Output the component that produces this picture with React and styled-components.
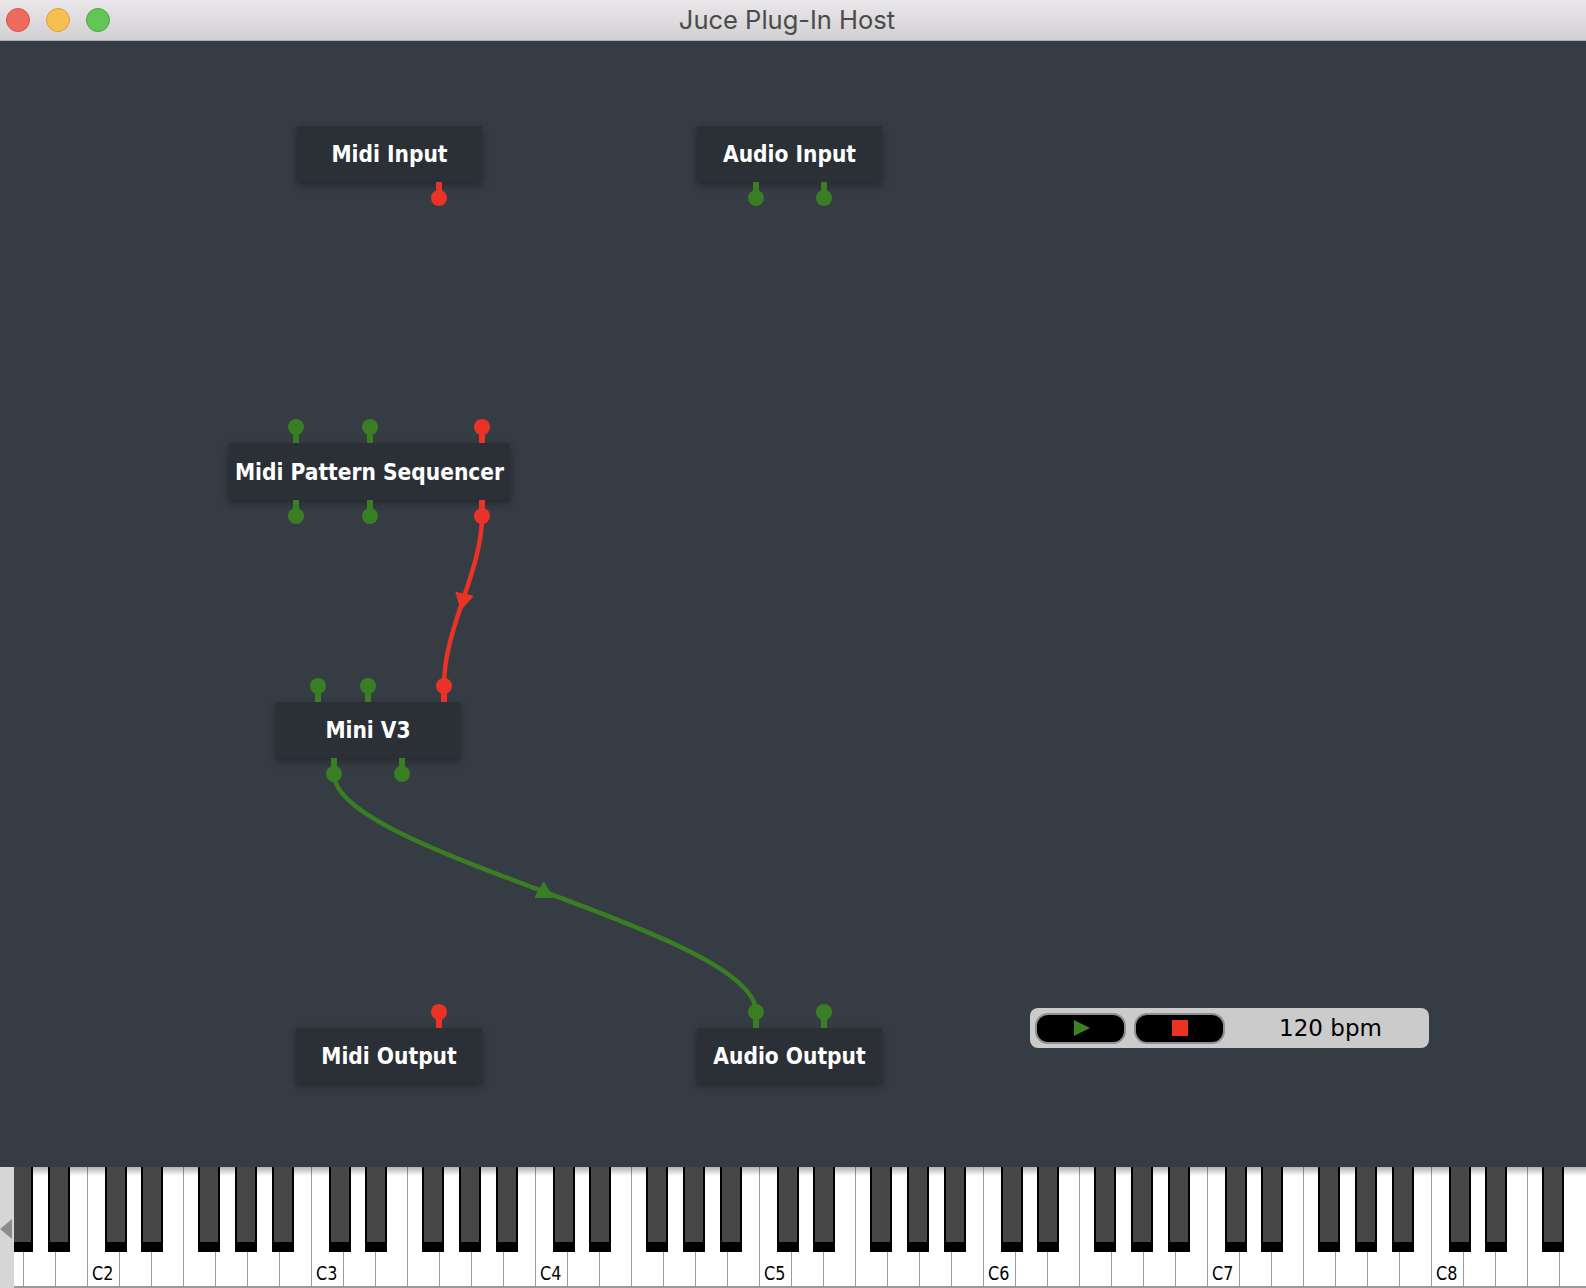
import React from 'react';
import styled, { createGlobalStyle } from 'styled-components';

const GlobalStyle = createGlobalStyle`
  * { box-sizing: border-box; }
  html, body { margin: 0; padding: 0; width: 1586px; height: 1288px; overflow: hidden; background: #363c44; }
  #root { width: 1586px; height: 1288px; }
`;

const RED = '#ea3326';
const GREEN = '#3a7e23';

const Window = styled.div`
  width: 1586px;
  height: 1288px;
  display: flex;
  flex-direction: column;
  overflow: hidden;
  font-family: "DejaVu Sans", sans-serif;
`;

const TitleBar = styled.div`
  flex: none;
  height: 41px;
  display: grid;
  grid-template-columns: 1fr auto 1fr;
  align-items: center;
  padding: 0 18px 0 6px;
  background: linear-gradient(#e9e7e9, #d2d0d2);
  border-bottom: 1px solid #aeacae;
`;

const Lights = styled.div`
  display: flex;
  gap: 16px;
`;

const Light = styled.span`
  width: 24px;
  height: 24px;
  border-radius: 50%;
  background: ${p => p.$bg};
  border: 1px solid ${p => p.$edge};
`;

const Title = styled.div`
  font-family: Inter, "Open Sans", sans-serif;
  font-size: 25.5px;
  color: #4b4b4b;
  line-height: 1;
`;

const Canvas = styled.div`
  flex: 1;
  position: relative;
  background: #363c44;
`;

const Wires = styled.svg`
  position: absolute;
  left: 0;
  top: 0;
  pointer-events: none;
`;

const NodeBox = styled.div`
  position: absolute;
  left: ${p => p.$x}px;
  top: ${p => p.$y}px;
  width: ${p => p.$w}px;
  height: ${p => p.$h}px;
  background: #2b3036;
  box-shadow: 0 3px 7px rgba(0, 0, 0, 0.35);
  display: flex;
  align-items: center;
  justify-content: center;
  color: #ffffff;
  font-family: "DejaVu Sans Condensed", "DejaVu Sans", sans-serif;
  font-stretch: condensed;
  font-weight: bold;
  font-size: 22.5px;
  white-space: nowrap;
`;

const Pin = styled.div`
  position: absolute;
  left: ${p => p.$x - 3}px;
  width: 6px;
  height: 16px;
  background: ${p => p.$color};
  ${p => (p.$side === 'top' ? 'bottom: 100%;' : 'top: 100%;')}
  &::after {
    content: '';
    position: absolute;
    left: -5px;
    width: 16px;
    height: 16px;
    border-radius: 50%;
    background: ${p => p.$color};
    ${p => (p.$side === 'top' ? 'top: -8px;' : 'bottom: -8px;')}
  }
`;

const Transport = styled.div`
  position: absolute;
  left: 1030px;
  top: 967px;
  width: 399px;
  height: 40px;
  border-radius: 8px;
  background: #cbcbcb;
  display: flex;
  align-items: center;
  gap: 8px;
  padding: 0 5px;
`;

const TransportButton = styled.div`
  width: 91px;
  height: 31px;
  border-radius: 13px;
  background: #000;
  border: 2px solid #8b9095;
  display: flex;
  align-items: center;
  justify-content: center;
`;

const PlayGlyph = styled.span`
  width: 0;
  height: 0;
  border-top: 8px solid transparent;
  border-bottom: 8px solid transparent;
  border-left: 16px solid #3c8123;
  margin-left: 2px;
`;

const StopGlyph = styled.span`
  width: 16px;
  height: 16px;
  background: ${RED};
`;

const Bpm = styled.div`
  flex: 1;
  text-align: center;
  font-family: "DejaVu Sans", sans-serif;
  font-size: 23px;
  color: #000;
  padding-left: 4px;
`;

const Keyboard = styled.div`
  flex: none;
  height: 121px;
  display: flex;
  background: #fff;
`;

const ScrollButton = styled.div`
  flex: none;
  width: 14px;
  background: #d6d6d6;
  display: flex;
  align-items: center;
  padding-top: 2px;
  &::before {
    content: '';
    width: 0;
    height: 0;
    border-top: 10px solid transparent;
    border-bottom: 10px solid transparent;
    border-right: 12px solid #8d8d8d;
  }
`;

const KeyArea = styled.div`
  flex: 1;
  position: relative;
  overflow: hidden;
  border-bottom: 2px solid #9a9a9a;
  &::after {
    content: '';
    position: absolute;
    left: 0;
    right: 0;
    top: 0;
    height: 9px;
    background: linear-gradient(rgba(0, 0, 0, 0.3), rgba(0, 0, 0, 0));
    z-index: 1;
  }
`;

const KeyStrip = styled.div`
  position: relative;
  display: flex;
  height: 100%;
  margin-left: -23px;
`;

const WhiteKey = styled.div`
  flex: none;
  width: 32px;
  height: 100%;
  position: relative;
  border-left: 1px solid #9b9b9b;
  background: #fff;
`;

const KeyLabel = styled.span`
  position: absolute;
  left: 4px;
  bottom: 3px;
  font-family: "DejaVu Sans", sans-serif;
  font-size: 20px;
  line-height: 20px;
  color: #000;
  transform: scaleX(0.8);
  transform-origin: left bottom;
`;

const BlackKey = styled.div.attrs(p => ({ style: { left: `${p.$left}px` } }))`
  position: absolute;
  top: 0;
  width: 22px;
  height: 85px;
  background: #000;
  z-index: 2;
  &::before {
    content: '';
    position: absolute;
    left: 2px;
    right: 2px;
    top: 0;
    bottom: 10px;
    background: #474747;
  }
`;

const CANVAS_TOP = 41;

const nodes = [
  { name: 'Midi Input', x: 297, y: 126, w: 185, h: 56, pins: [{ side: 'bottom', x: 142, c: RED }] },
  {
    name: 'Audio Input', x: 697, y: 126, w: 185, h: 56,
    pins: [{ side: 'bottom', x: 59, c: GREEN }, { side: 'bottom', x: 127, c: GREEN }],
  },
  {
    name: 'Midi Pattern Sequencer', x: 229, y: 443, w: 281, h: 57,
    pins: [
      { side: 'top', x: 67, c: GREEN }, { side: 'top', x: 141, c: GREEN }, { side: 'top', x: 253, c: RED },
      { side: 'bottom', x: 67, c: GREEN }, { side: 'bottom', x: 141, c: GREEN }, { side: 'bottom', x: 253, c: RED },
    ],
  },
  {
    name: 'Mini V3', x: 276, y: 702, w: 184, h: 56,
    pins: [
      { side: 'top', x: 42, c: GREEN }, { side: 'top', x: 92, c: GREEN }, { side: 'top', x: 168, c: RED },
      { side: 'bottom', x: 58, c: GREEN }, { side: 'bottom', x: 126, c: GREEN },
    ],
  },
  { name: 'Midi Output', x: 296, y: 1028, w: 186, h: 55, pins: [{ side: 'top', x: 143, c: RED }] },
  {
    name: 'Audio Output', x: 697, y: 1028, w: 185, h: 55,
    pins: [{ side: 'top', x: 59, c: GREEN }, { side: 'top', x: 127, c: GREEN }],
  },
];

const wires = [
  { a: { x: 482, y: 516 }, b: { x: 444, y: 685 }, c: RED },
  { a: { x: 334, y: 774 }, b: { x: 756, y: 1012 }, c: GREEN },
];

function Wire({ a, b, c }) {
  const p1 = { x: a.x, y: a.y - CANVAS_TOP };
  const p2 = { x: b.x, y: b.y - CANVAS_TOP };
  const dy = p2.y - p1.y;
  const d = `M${p1.x} ${p1.y} C${p1.x} ${p1.y + dy * 0.33} ${p2.x} ${p1.y + dy * 0.66} ${p2.x} ${p2.y}`;
  const mx = (p1.x + p2.x) / 2;
  const my = (p1.y + p2.y) / 2;
  const ang = (Math.atan2(p2.y - p1.y, p2.x - p1.x) * 180) / Math.PI;
  return (
    <g>
      <path d={d} fill="none" stroke={c} strokeWidth="4.5" strokeLinecap="round" />
      <polygon
        points="-6,-8 -6,8 8,0"
        fill={c}
        stroke={c}
        strokeWidth="2"
        strokeLinejoin="round"
        transform={`translate(${mx} ${my}) rotate(${ang})`}
      />
    </g>
  );
}

const LETTERS = ['C', 'D', 'E', 'F', 'G', 'A', 'B'];
const BLACK_OFFSET = { C: 18, D: 22, F: 15, G: 20, A: 25 };
const whiteKeys = Array.from({ length: 50 }, (_, i) => {
  const n = 4 + i;
  return { letter: LETTERS[n % 7], octave: 1 + Math.floor(n / 7) };
});

function PianoKeyboard() {
  return (
    <Keyboard>
      <ScrollButton />
      <KeyArea>
        <KeyStrip>
          {whiteKeys.map((k, i) => (
            <WhiteKey key={`w${i}`}>
              {k.letter === 'C' && <KeyLabel>C{k.octave}</KeyLabel>}
            </WhiteKey>
          ))}
          {whiteKeys.map((k, i) =>
            BLACK_OFFSET[k.letter] !== undefined && i < whiteKeys.length - 1 ? (
              <BlackKey key={`b${i}`} $left={i * 32 + BLACK_OFFSET[k.letter]} />
            ) : null
          )}
        </KeyStrip>
      </KeyArea>
    </Keyboard>
  );
}

export default function App() {
  return (
    <>
      <GlobalStyle />
      <Window>
        <TitleBar>
          <Lights>
            <Light $bg="#ee6a5f" $edge="#d5544a" />
            <Light $bg="#f6bf50" $edge="#d9a23f" />
            <Light $bg="#62c555" $edge="#4ea940" />
          </Lights>
          <Title>Juce Plug-In Host</Title>
          <span />
        </TitleBar>
        <Canvas>
          <Wires width="1586" height="1126" viewBox="0 0 1586 1126">
            {wires.map((w, i) => (
              <Wire key={i} {...w} />
            ))}
          </Wires>
          {nodes.map(n => (
            <NodeBox key={n.name} $x={n.x} $y={n.y - CANVAS_TOP} $w={n.w} $h={n.h}>
              {n.name}
              {n.pins.map((p, j) => (
                <Pin key={j} $side={p.side} $x={p.x} $color={p.c} />
              ))}
            </NodeBox>
          ))}
          <Transport>
            <TransportButton>
              <PlayGlyph />
            </TransportButton>
            <TransportButton>
              <StopGlyph />
            </TransportButton>
            <Bpm>120 bpm</Bpm>
          </Transport>
        </Canvas>
        <PianoKeyboard />
      </Window>
    </>
  );
}
